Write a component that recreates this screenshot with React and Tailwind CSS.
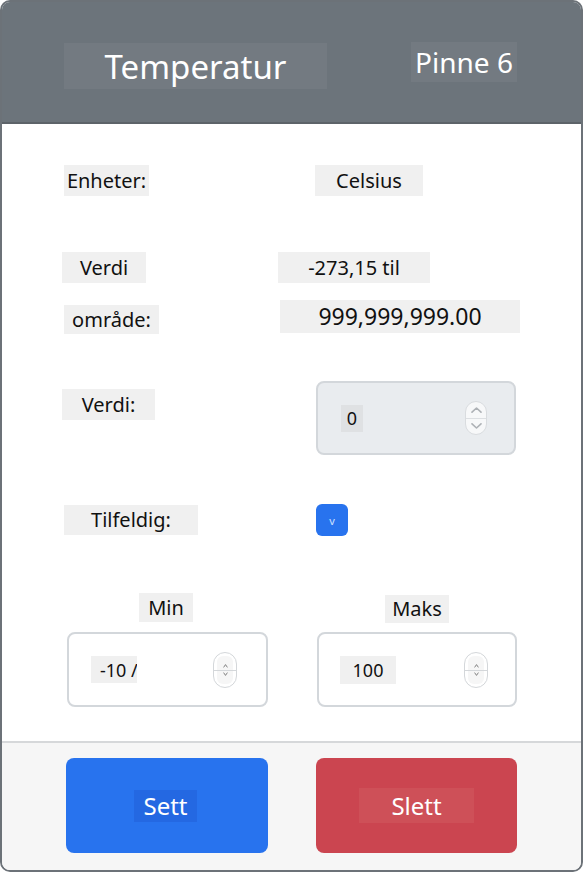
import React from 'react';

// ─── Small pieces ─────────────────────────────────────────────────────────────
function Label({ children, className = '' }) {
  return (
    <div className={`flex items-center justify-center bg-[#f0f0f0] text-[20px] leading-none text-[#111] whitespace-nowrap ${className}`}>
      {children}
    </div>
  );
}

function Spinner({ big }) {
  if (big) {
    return (
      <div className="w-[22px] h-[34px] rounded-full border border-[#d9dcdf] bg-[#f7f8f9] flex flex-col overflow-hidden">
        <div className="flex-1 flex items-center justify-center border-b border-[#dcdfe2]">
          <svg width="11" height="6" viewBox="0 0 11 6" fill="none">
            <path d="M1 5.2 5.5 1 10 5.2" stroke="#aeb2b6" strokeWidth="1.6" strokeLinecap="round" strokeLinejoin="round" />
          </svg>
        </div>
        <div className="flex-1 flex items-center justify-center">
          <svg width="11" height="6" viewBox="0 0 11 6" fill="none">
            <path d="M1 0.8 5.5 5 10 0.8" stroke="#aeb2b6" strokeWidth="1.6" strokeLinecap="round" strokeLinejoin="round" />
          </svg>
        </div>
      </div>
    );
  }
  // small one on the Min / Maks fields
  return (
    <div className="relative w-[24px] h-[36px] rounded-full border border-[#d4d7da] bg-white flex items-center justify-center">
      <div className="w-[16px] h-[28px] rounded-[6px] bg-[#f6f6f6] flex flex-col items-center justify-center gap-[4px]">
        <svg width="5" height="4" viewBox="0 0 5 4" fill="none">
          <path d="M0.6 3.4 2.5 0.6 4.4 3.4" stroke="#777" strokeWidth="0.9" />
        </svg>
        <svg width="5" height="4" viewBox="0 0 5 4" fill="none">
          <path d="M0.6 0.6 2.5 3.4 4.4 0.6" stroke="#777" strokeWidth="0.9" />
        </svg>
      </div>
      <div className="absolute left-[-1px] right-[-1px] top-1/2 h-px bg-[#d4d7da]" />
    </div>
  );
}

export default function App() {
  return (
    <div className="w-[583px] h-[872px] border-2 border-[#6c7278] rounded-[10px] overflow-hidden bg-white flex flex-col font-['Noto_Sans','Open_Sans',sans-serif]">
      {/* header */}
      <div className="h-[122px] shrink-0 bg-[#6c747b] border-b-2 border-[#5d6369] flex items-start pt-[41px]">
        <div className="ml-[62px] w-[263px] h-[46px] bg-[#737a81] flex items-center justify-center text-white text-[33px] leading-none">
          Temperatur
        </div>
        <div className="ml-[84px] mt-[-1px] w-[106px] h-[40px] bg-[#737a81] flex items-center justify-center text-white text-[28px] leading-none">
          Pinne 6
        </div>
      </div>

      {/* body */}
      <div className="h-[617px] shrink-0 flex flex-col">
        <div className="flex items-start mt-[41px]">
          <Label className="ml-[62px] w-[85px] h-[31px]">Enheter:</Label>
          <Label className="ml-[166px] w-[108px] h-[31px]">Celsius</Label>
        </div>

        <div className="flex items-start mt-[56px]">
          <Label className="ml-[60px] w-[84px] h-[31px]">Verdi</Label>
          <Label className="ml-[132px] w-[152px] h-[31px]">-273,15 til</Label>
        </div>

        <div className="flex items-start mt-[17px]">
          <Label className="ml-[62px] mt-[5px] w-[95px] h-[29px]">område:</Label>
          <Label className="ml-[121px] w-[240px] h-[33px] text-[23px]">999,999,999.00</Label>
        </div>

        <div className="flex items-start mt-[47px]">
          <Label className="ml-[60px] mt-[8px] w-[93px] h-[31px]">Verdi:</Label>
          <div className="ml-[161px] w-[200px] h-[74px] rounded-[8px] border-2 border-[#d3d7db] bg-[#e9ecef] flex items-center justify-between">
            <div className="ml-[23px] w-[22px] h-[27px] bg-[#dfe1e3] flex items-center justify-center text-[18px] leading-none text-[#111]">0</div>
            <div className="mr-[27px]"><Spinner big /></div>
          </div>
        </div>

        <div className="flex items-start mt-[49px]">
          <Label className="ml-[62px] mt-[1px] w-[134px] h-[30px]">Tilfeldig:</Label>
          <div className="ml-[118px] w-[32px] h-[32px] rounded-[6px] bg-[#2873ee] flex items-center justify-center text-[11px] leading-none text-[#cfe0ff]">
            v
          </div>
        </div>

        <div className="flex items-start mt-[57px]">
          <div className="ml-[65px] w-[201px] flex flex-col items-center">
            <Label className="w-[54px] h-[29px] text-[19px] mr-[3px]">Min</Label>
            <div className="mt-[10px] w-[201px] h-[75px] rounded-[8px] border-2 border-[#d3d7db] bg-white flex items-center justify-between">
              <div className="ml-[22px] w-[46px] h-[27px] bg-[#f0f0f0] flex items-center pl-[9px] overflow-hidden whitespace-nowrap text-[18px] leading-none text-[#111]">
                -10&nbsp;/
              </div>
              <div className="mr-[29px]"><Spinner /></div>
            </div>
          </div>
          <div className="ml-[49px] w-[200px] flex flex-col items-center">
            <Label className="mt-[2px] w-[64px] h-[28px] text-[19px]">Maks</Label>
            <div className="mt-[9px] w-[200px] h-[75px] rounded-[8px] border-2 border-[#d3d7db] bg-white flex items-center justify-between">
              <div className="ml-[21px] w-[56px] h-[28px] bg-[#f0f0f0] flex items-center justify-center text-[18px] leading-none text-[#111]">
                100
              </div>
              <div className="mr-[27px]"><Spinner /></div>
            </div>
          </div>
        </div>
      </div>

      {/* footer */}
      <div className="flex-1 border-t-2 border-[#d6d8da] bg-[#f6f6f6] flex items-start pt-[15px]">
        <button className="ml-[64px] w-[202px] h-[95px] rounded-[8px] bg-[#2873ee] flex items-center justify-center">
          <span className="w-[63px] h-[32px] bg-[#2468e2] flex items-center justify-center text-white text-[24px] leading-none mr-[3px]">Sett</span>
        </button>
        <button className="ml-[48px] w-[201px] h-[95px] rounded-[8px] bg-[#cb4550] flex items-center justify-center">
          <span className="w-[115px] h-[35px] bg-[#ce5058] flex items-center justify-center text-white text-[24px] leading-none">Slett</span>
        </button>
      </div>
    </div>
  );
}
